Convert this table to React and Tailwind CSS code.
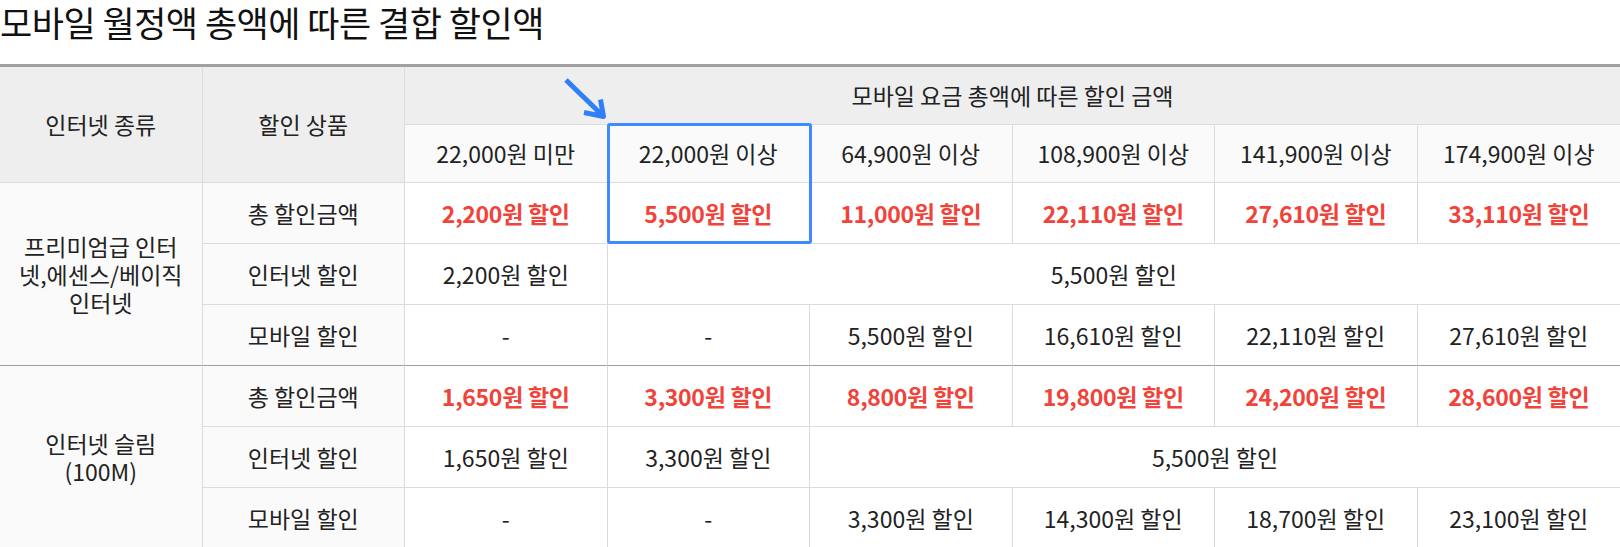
import React from 'react';

const tiers = ['22,000원 미만', '22,000원 이상', '64,900원 이상', '108,900원 이상', '141,900원 이상', '174,900원 이상'];

const groups = [
  {
    name: ['프리미엄급 인터', '넷,에센스/베이직', '인터넷'],
    total: ['2,200', '5,500', '11,000', '22,110', '27,610', '33,110'],
    internet: [{ v: '2,200원 할인', span: 1 }, { v: '5,500원 할인', span: 5 }],
    mobile: ['-', '-', '5,500원 할인', '16,610원 할인', '22,110원 할인', '27,610원 할인'],
  },
  {
    name: ['인터넷 슬림', '(100M)'],
    total: ['1,650', '3,300', '8,800', '19,800', '24,200', '28,600'],
    internet: [{ v: '1,650원 할인', span: 1 }, { v: '3,300원 할인', span: 1 }, { v: '5,500원 할인', span: 4 }],
    mobile: ['-', '-', '3,300원 할인', '14,300원 할인', '18,700원 할인', '23,100원 할인'],
  },
];

const line = 'border-b border-r border-[#dcdcdc]';

const Arrow = () => (
  <svg className="absolute left-[-48px] top-[-50px] w-[48px] h-[48px] overflow-visible" viewBox="0 0 48 48" fill="none">
    <path d="M6 5 L41 39 M24 37.5 L43.5 41.5 L40.5 24.5" stroke="#2f80f8" strokeWidth="5" strokeLinejoin="round" />
  </svg>
);

const App = () => {
  return (
    <div className="w-[1620px] bg-white text-[#222] font-['Noto_Sans_CJK_KR','Noto_Sans',sans-serif]">
      <h1 className="h-[64px] text-[35px] leading-[44px] text-[#111] tracking-[-0.5px]">모바일 월정액 총액에 따른 결합 할인액</h1>
      <table className="w-full table-fixed border-separate border-spacing-0 border-t-[3px] border-[#a0a0a0] text-[23px] text-center">
        <colgroup>
          {Array.from({ length: 8 }).map((_, i) => <col key={i} className="w-[12.5%]" />)}
        </colgroup>
        <thead>
          <tr>
            <th rowSpan={2} className={`${line} bg-[#eeeeee] font-normal`}>인터넷 종류</th>
            <th rowSpan={2} className={`${line} bg-[#eeeeee] font-normal`}>할인 상품</th>
            <th colSpan={6} className="h-[58px] border-b border-[#dcdcdc] bg-[#eeeeee] font-normal">모바일 요금 총액에 따른 할인 금액</th>
          </tr>
          <tr>
            {tiers.map((t, i) => (
              <th key={t} className={`h-[58px] bg-[#fafafa] font-normal border-b border-[#dcdcdc] ${i < 5 ? 'border-r' : ''} ${i === 1 ? 'relative' : ''}`}>
                {t}
                {i === 1 && (
                  <>
                    <Arrow />
                    <div className="absolute left-[-1px] top-[-2px] w-[205px] h-[121px] border-[3px] border-[#3d8bff] rounded-[3px]" />
                  </>
                )}
              </th>
            ))}
          </tr>
        </thead>
        <tbody>
          {groups.map((g, gi) => {
            const last = gi === 0 ? 'border-b-[#a0a0a0]' : '';
            return (
              <React.Fragment key={gi}>
                <tr>
                  <td rowSpan={3} className={`${line} ${last} bg-[#fafafa] leading-[28px]`}>
                    {g.name.map((n, i) => <div key={i}>{n}</div>)}
                  </td>
                  <td className={`${line} h-[61px] bg-[#fafafa]`}>총 할인금액</td>
                  {g.total.map((v, i) => (
                    <td key={i} className={`border-b border-[#dcdcdc] ${i < 5 ? 'border-r' : ''} font-bold text-[#f0433a] tracking-[-0.3px]`}>{v}원 할인</td>
                  ))}
                </tr>
                <tr>
                  <td className={`${line} h-[61px] bg-[#fafafa]`}>인터넷 할인</td>
                  {g.internet.map((c, i) => (
                    <td key={i} colSpan={c.span} className={`border-b border-[#dcdcdc] ${i < g.internet.length - 1 ? 'border-r' : ''}`}>{c.v}</td>
                  ))}
                </tr>
                <tr>
                  <td className={`${line} ${last} h-[61px] bg-[#fafafa]`}>모바일 할인</td>
                  {g.mobile.map((v, i) => (
                    <td key={i} className={`border-b border-[#dcdcdc] ${last} ${i < 5 ? 'border-r' : ''}`}>{v}</td>
                  ))}
                </tr>
              </React.Fragment>
            );
          })}
        </tbody>
      </table>
    </div>
  );
};

export default App;
